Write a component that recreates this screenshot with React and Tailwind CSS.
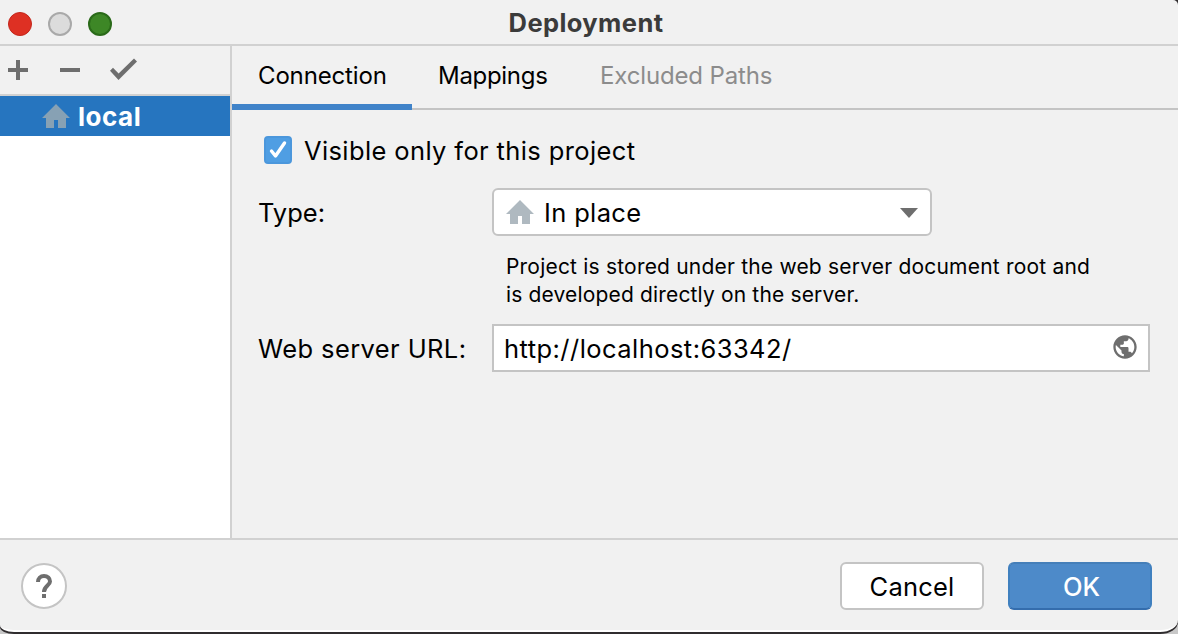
import React from "react";

function HomeIcon({ className }) {
  return (
    <svg className={className} width="28" height="24" viewBox="0 0 28 24" fill="currentColor">
      <path d="M14 0 28 14H24V24H16V16H12V24H4V14H0Z" />
    </svg>
  );
}

function TitleBar() {
  return (
    <header className="relative flex h-[46px] shrink-0 items-center justify-center border-b-2 border-[#d1d1d1]">
      <div className="absolute left-2 top-3 flex gap-4">
        <span className="size-6 rounded-full border border-[#c3261b] bg-[#de3023]" />
        <span className="size-6 rounded-full border-2 border-[#a9a9a9] bg-[#dcdcdc]" />
        <span className="size-6 rounded-full border-2 border-[#2a6a19] bg-[#3d8726]" />
      </div>
      <h1 className="ml-[-6px] mt-0.5 text-[25.5px] font-bold leading-8 tracking-[0.4px] text-[#3b3b3b]">Deployment</h1>
    </header>
  );
}

function Sidebar() {
  return (
    <aside className="flex w-[232px] shrink-0 flex-col border-r-2 border-[#d1d1d1] bg-white">
      <div className="h-[50px] shrink-0 border-b-2 border-[#d1d1d1] bg-[#f1f1f1]">
        <svg width="150" height="48" viewBox="0 46 150 48" fill="#6e6e6e">
          <path d="M16 60h4v8h8v4h-8v8h-4v-8H8v-4h8z" />
          <path d="M60 68h20v4H60z" />
          <path d="m110 70.8 3-3 5.6 5.6L134 58.4l3 3L118.5 80z" />
        </svg>
      </div>
      <div className="flex h-10 items-center bg-[#2675bf] pl-[42px] text-white">
        <HomeIcon className="text-[#87a1b4]" />
        <span className="ml-2 mt-0.5 text-[26px] font-bold leading-8 tracking-[0.5px]">local</span>
      </div>
    </aside>
  );
}

function Tabs() {
  return (
    <nav className="flex h-16 shrink-0 border-b-2 border-[#c4c4c4] text-[24px] leading-[60px]">
      <div className="mb-[-2px] w-[180px] border-b-[6px] border-[#4083c9] pl-[26px] tracking-[-0.15px]">Connection</div>
      <div className="ml-[26px] w-[162px] tracking-[-0.3px]">Mappings</div>
      <div className="tracking-[-0.15px] text-[#8c8c8c]">Excluded Paths</div>
    </nav>
  );
}

function Connection() {
  return (
    <section className="flex flex-col text-[25.5px] leading-8">
      <label className="mt-[25px] flex h-8 items-center pl-8">
        <span className="mb-0.5 flex size-7 items-center justify-center rounded-[4px] border-2 border-[#4b97dc] bg-[#4f9ee3]">
          <svg width="24" height="24" viewBox="0 0 24 24" fill="none" stroke="#fff" strokeWidth="3.4" strokeLinecap="round" strokeLinejoin="round">
            <path d="m5.5 13 4 5L18.5 5" />
          </svg>
        </span>
        <span className="ml-3 tracking-[0.38px]">Visible only for this project</span>
      </label>
      <div className="mt-[21px] flex h-12 items-center pl-[26px]">
        <span className="mt-0.5 w-[234px]">Type:</span>
        <div className="flex h-12 w-[440px] items-center rounded-[6px] border-2 border-[#c4c4c4] bg-white pl-3">
          <HomeIcon className="text-[#afb9c0]" />
          <span className="ml-2.5 mt-0.5 tracking-[0.35px]">In place</span>
          <svg className="ml-auto mr-3 mt-0.5" width="18" height="10" viewBox="0 0 18 10" fill="#6e6e6e">
            <path d="M0 0h18L9 10z" />
          </svg>
        </div>
      </div>
      <p className="ml-[274px] mt-[17px] text-[21px] leading-7">
        <span className="block whitespace-nowrap tracking-[0.2px]">Project is stored under the web server document root and</span>
        <span className="block whitespace-nowrap tracking-[0.16px]">is developed directly on the server.</span>
      </p>
      <div className="mt-[15px] flex h-12 items-center pl-[26px]">
        <span className="mt-0.5 w-[234px] tracking-[0.4px]">Web server URL:</span>
        <div className="flex h-12 w-[658px] items-center border-2 border-[#c4c4c4] bg-white pl-2.5 pr-[9px]">
          <span className="mt-0.5 tracking-[0.45px]">http://localhost:63342/</span>
          <svg className="mb-0.5 ml-auto" width="28" height="28" viewBox="0 0 24 24" fill="#6e6e6e">
            <path d="M12 2C6.48 2 2 6.48 2 12s4.48 10 10 10 10-4.48 10-10S17.52 2 12 2zm-1 17.93c-3.95-.49-7-3.85-7-7.93 0-.62.08-1.21.21-1.79L9 15v1c0 1.1.9 2 2 2v1.93zm6.9-2.54c-.26-.81-1-1.39-1.9-1.39h-1v-3c0-.55-.45-1-1-1H8v-2h2c.55 0 1-.45 1-1V7h2c1.1 0 2-.9 2-2v-.41c2.93 1.19 5 4.06 5 7.41 0 2.08-.8 3.97-2.1 5.39z" />
          </svg>
        </div>
      </div>
    </section>
  );
}

function Footer() {
  return (
    <footer className="flex h-[92px] shrink-0 items-center border-t-2 border-[#d1d1d1] pl-[21px] pr-[26px] pt-0.5 text-[25.5px]">
      <button className="flex size-[46px] items-center justify-center rounded-full border-2 border-[#c4c4c4] bg-white">
        <svg width="18" height="26" viewBox="0 0 18 26" fill="none" stroke="#6e6e6e" strokeWidth="4">
          <path d="M3 9C3 5.500 5.500 3 9 3s6 2.300 6 5.500c0 4-6 4.500-6 10.500" />
          <path d="M7 23h4" />
        </svg>
      </button>
      <button className="ml-auto h-12 w-36 rounded-[6px] border-2 border-[#c4c4c4] bg-white pt-0.5 tracking-[0.2px]">Cancel</button>
      <button className="ml-6 h-12 w-36 rounded-[6px] border-2 border-x-[#4080bf] border-b-[#346dad] border-t-[#457fb9] bg-[#4d8ac9] pt-0.5 pl-[3px] font-medium text-white">OK</button>
    </footer>
  );
}

export default function App() {
  return (
    <div className="h-[634px] w-[1178px] overflow-hidden bg-[#c8c8c8]" style={{ fontFamily: 'Inter, "Liberation Sans", sans-serif' }}>
      <div className="h-[634px] rounded-bl-[14px_7px] rounded-br-[18px_12px] bg-[#302d2f]">
        <main className="flex h-[632px] flex-col overflow-hidden rounded-bl-[14px_7px] rounded-br-[18px_12px] rounded-tr-[5px] border-b-2 border-white bg-[#f1f1f1] text-black">
          <TitleBar />
          <div className="flex min-h-0 flex-1">
            <Sidebar />
            <div className="min-w-0 flex-1">
              <Tabs />
              <Connection />
            </div>
          </div>
          <Footer />
        </main>
      </div>
    </div>
  );
}
